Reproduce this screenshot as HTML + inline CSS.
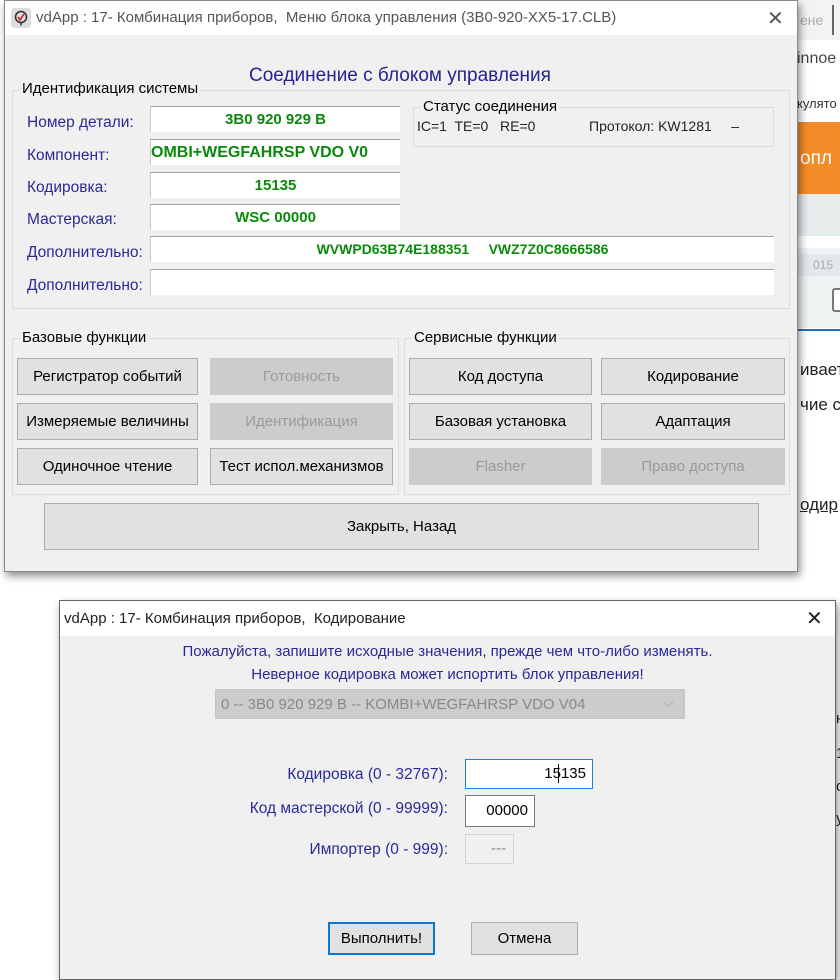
<!DOCTYPE html>
<html><head><meta charset="utf-8"><style>
*{box-sizing:border-box}
body{margin:0;width:840px;height:977px;position:relative;overflow:hidden;background:#fff;font-family:"Liberation Sans","DejaVu Sans",sans-serif;font-size:15px;color:#000}
.a{position:absolute;white-space:nowrap}
.dlg{position:absolute;background:#f0f0f0;border:1px solid #888;box-shadow:2px 4px 8px rgba(0,0,0,.45)}
.tb{position:absolute;left:0;right:0;top:0;background:#fff;color:#333;font-size:15px}
.lbl{color:#2a2a96;font-size:15.5px}
.fld{position:absolute;background:#fff;border-top:1px solid #a0a0a0;border-left:1px solid #c8c8c8;color:#0a8a0a;font-weight:bold;text-align:center;font-size:15px;overflow:hidden;white-space:nowrap}
.grp{position:absolute;border:1px solid #dcdcdc}
.gt{position:absolute;background:#f0f0f0;padding:0 2px;font-size:15px;color:#000;white-space:nowrap}
.btn{position:absolute;background:#e1e1e1;border:1px solid #adadad;text-align:center;font-size:15px;display:flex;align-items:center;justify-content:center;white-space:nowrap}
.dis{background:#cccccc;border-color:#cccccc;color:#9a9a9a}
</style></head><body>
<div class="a" style="left:797px;top:0;width:43px;height:40px;background:#f3f3f3"></div>
<div class="a" style="left:800px;top:12px;color:#aaa;font-size:14px">ене</div>
<div class="a" style="left:832px;top:5px;width:2px;height:30px;background:#666"></div>
<div class="a" style="left:797px;top:50px;font-size:16px;color:#444">innoe</div>
<div class="a" style="left:797px;top:96px;font-size:13px;color:#333">кулято</div>
<div class="a" style="left:797px;top:122px;width:43px;height:72px;background:#f28c28"></div>
<div class="a" style="left:800px;top:148px;font-size:19px;color:#fff">опл</div>
<div class="a" style="left:797px;top:194px;width:43px;height:42px;background:#e6ebec"></div>
<div class="a" style="left:797px;top:248px;width:43px;height:80px;background:#eef2f3"></div>
<div class="a" style="left:797px;top:254px;width:43px;height:22px;background:#e4e8ea;color:#aaa;font-size:12px;padding:4px 0 0 16px">015</div>
<div class="a" style="left:832px;top:288px;width:12px;height:24px;border:2px solid #777;border-radius:3px;background:#fff"></div>
<div class="a" style="left:797px;top:329px;width:43px;height:2px;background:#2a6ab8"></div>
<div class="a" style="left:800px;top:360px;font-size:17px;color:#222">ивает</div>
<div class="a" style="left:800px;top:395px;font-size:17px;color:#222">чие с</div>
<div class="a" style="left:800px;top:495px;font-size:17px;color:#222;text-decoration:underline">одир</div>
<div class="a" style="left:836px;top:710px;font-size:15px;color:#222">н</div>
<div class="a" style="left:836px;top:745px;font-size:15px;color:#222">1</div>
<div class="a" style="left:836px;top:778px;font-size:15px;color:#222">о</div>
<div class="a" style="left:836px;top:810px;font-size:15px;color:#222;text-decoration:underline">у</div>

<div class="dlg" style="left:4px;top:0;width:794px;height:572px">
 <div class="tb" style="height:34px">
  <svg class="a" style="left:6px;top:7px" width="20" height="20" viewBox="0 0 20 20"><rect x="0" y="0" width="20" height="20" rx="3" fill="#ddd"/><circle cx="10" cy="9" r="5.5" fill="none" stroke="#333" stroke-width="1.6"/><path d="M7 9l2 3 4-6" stroke="#d22" stroke-width="1.6" fill="none"/><path d="M10 14.5v3" stroke="#333" stroke-width="1.5"/></svg>
  <div class="a" style="left:31px;top:8px;color:#555">vdApp : 17- Комбинация приборов,&nbsp; Меню блока управления (3B0-920-XX5-17.CLB)</div>
  <div class="a" style="left:762px;top:5px;font-size:20px;color:#555">✕</div>
 </div>
 <div class="a" style="left:244px;top:64px;font-size:19px;color:#24248e">Соединение с блоком управления</div>
 <div class="grp" style="left:7px;top:89px;width:778px;height:219px"></div>
 <div class="gt" style="left:15px;top:79px">Идентификация системы</div>
 <div class="a lbl" style="left:22px;top:113px">Номер детали:</div>
 <div class="a lbl" style="left:22px;top:146px">Компонент:</div>
 <div class="a lbl" style="left:22px;top:178px">Кодировка:</div>
 <div class="a lbl" style="left:22px;top:210px">Мастерская:</div>
 <div class="a lbl" style="left:22px;top:243px">Дополнительно:</div>
 <div class="a lbl" style="left:22px;top:276px">Дополнительно:</div>
 <div class="fld" style="left:145px;top:105px;width:250px;height:26px;padding-top:4px">3B0 920 929 B</div>
 <div class="fld" style="left:145px;top:138px;width:250px;height:26px;padding-top:4px;text-align:left;font-size:16px">OMBI+WEGFAHRSP VDO V0</div>
 <div class="fld" style="left:145px;top:171px;width:250px;height:26px;padding-top:4px">15135</div>
 <div class="fld" style="left:145px;top:203px;width:250px;height:26px;padding-top:4px">WSC 00000</div>
 <div class="fld" style="left:145px;top:235px;width:624px;height:26px;padding-top:4px;font-size:14px">WVWPD63B74E188351&nbsp;&nbsp;&nbsp;&nbsp;&nbsp;VWZ7Z0C8666586</div>
 <div class="fld" style="left:145px;top:268px;width:624px;height:26px"></div>
 <div class="grp" style="left:408px;top:106px;width:361px;height:40px"></div>
 <div class="gt" style="left:416px;top:97px">Статус соединения</div>
 <div class="a" style="left:412px;top:117px;font-size:14px;color:#222">IC=1&nbsp; TE=0&nbsp;&nbsp; RE=0</div>
 <div class="a" style="left:584px;top:117px;font-size:14px;color:#222">Протокол: KW1281&nbsp;&nbsp;&nbsp;&nbsp; –</div>

 <div class="grp" style="left:7px;top:337px;width:387px;height:157px"></div>
 <div class="gt" style="left:15px;top:328px">Базовые функции</div>
 <div class="grp" style="left:399px;top:337px;width:386px;height:157px"></div>
 <div class="gt" style="left:407px;top:328px">Сервисные функции</div>
 <div class="btn" style="left:12px;top:357px;width:181px;height:37px">Регистратор событий</div>
 <div class="btn dis" style="left:205px;top:357px;width:183px;height:37px">Готовность</div>
 <div class="btn" style="left:12px;top:402px;width:181px;height:37px">Измеряемые величины</div>
 <div class="btn dis" style="left:205px;top:402px;width:183px;height:37px">Идентификация</div>
 <div class="btn" style="left:12px;top:447px;width:181px;height:37px">Одиночное чтение</div>
 <div class="btn" style="left:205px;top:447px;width:183px;height:37px">Тест испол.механизмов</div>
 <div class="btn" style="left:404px;top:357px;width:183px;height:37px">Код доступа</div>
 <div class="btn" style="left:596px;top:357px;width:184px;height:37px">Кодирование</div>
 <div class="btn" style="left:404px;top:402px;width:183px;height:37px">Базовая установка</div>
 <div class="btn" style="left:596px;top:402px;width:184px;height:37px">Адаптация</div>
 <div class="btn dis" style="left:404px;top:447px;width:183px;height:37px">Flasher</div>
 <div class="btn dis" style="left:596px;top:447px;width:184px;height:37px">Право доступа</div>
 <div class="btn" style="left:39px;top:502px;width:715px;height:47px">Закрыть, Назад</div>
</div>

<div class="dlg" style="left:59px;top:600px;width:777px;height:380px;border-color:#666">
 <div class="tb" style="height:35px">
  <div class="a" style="left:4px;top:9px;color:#222">vdApp : 17- Комбинация приборов,&nbsp; Кодирование</div>
  <div class="a" style="left:746px;top:5px;font-size:20px;color:#222">✕</div>
 </div>
 <div class="a lbl" style="left:0;width:775px;top:42px;text-align:center;font-size:15px">Пожалуйста, запишите исходные значения, прежде чем что-либо изменять.</div>
 <div class="a lbl" style="left:0;width:775px;top:65px;text-align:center;font-size:15px">Неверное кодировка может испортить блок управления!</div>
 <div class="a" style="left:155px;top:88px;width:470px;height:30px;background:#cccccc;border:1px solid #c4c4c4;color:#888;padding:6px 0 0 5px">0 -- 3B0 920 929 B -- KOMBI+WEGFAHRSP VDO V04<span style="position:absolute;right:10px;top:4px;color:#aaa">⌵</span></div>
 <div class="a lbl" style="left:0;width:388px;top:165px;text-align:right">Кодировка (0 - 32767):</div>
 <div class="a" style="left:405px;top:158px;width:128px;height:30px;background:#fff;border:1px solid #2a7ad6;text-align:right;padding:5px 6px 0 0">15135</div>
 <div class="a" style="left:498px;top:163px;width:1px;height:19px;background:#000"></div>
 <div class="a lbl" style="left:0;width:388px;top:199px;text-align:right">Код мастерской (0 - 99999):</div>
 <div class="a" style="left:405px;top:194px;width:70px;height:32px;background:#fff;border:1px solid #777;text-align:right;padding:6px 6px 0 0">00000</div>
 <div class="a lbl" style="left:0;width:388px;top:240px;text-align:right">Импортер (0 - 999):</div>
 <div class="a" style="left:405px;top:233px;width:49px;height:30px;background:#f0f0f0;border:1px solid #d4d4d4;color:#888;text-align:right;padding:5px 7px 0 0">---</div>
 <div class="btn" style="left:268px;top:321px;width:107px;height:33px;border:2px solid #0a78d7">Выполнить!</div>
 <div class="btn" style="left:411px;top:321px;width:107px;height:33px">Отмена</div>
</div>
</body></html>
